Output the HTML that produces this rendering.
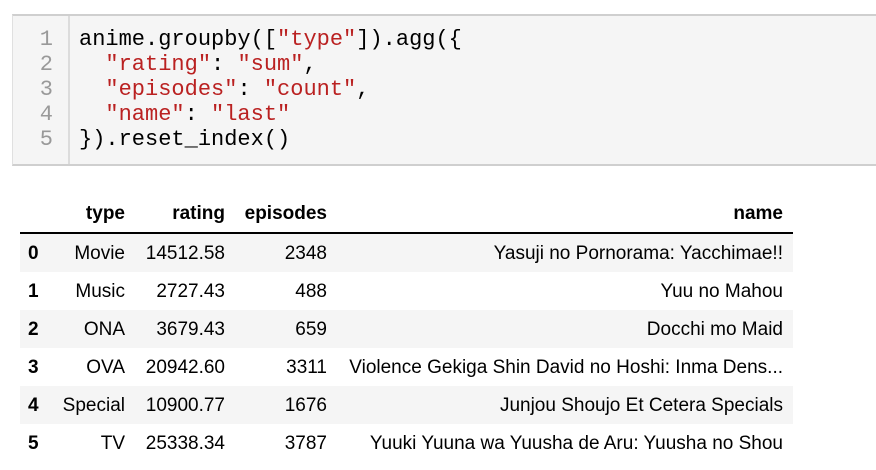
<!DOCTYPE html>
<html><head><meta charset="utf-8"><style>
body{margin:0;width:876px;height:470px;background:#fff;position:relative;overflow:hidden;font-family:"Liberation Sans",Arial,sans-serif;}
.code{position:absolute;left:12px;top:14px;width:864px;height:148px;background:#f5f5f5;border-top:2px solid #cfcfcf;border-bottom:2px solid #cfcfcf;border-left:1px solid #e0e0e0;}
.gut{position:absolute;left:55px;top:0;width:2px;height:148px;background:#dcdcdc;}
.ln{position:absolute;font-family:"Liberation Mono",monospace;font-size:22px;line-height:25px;}
.nums{left:0;width:40px;text-align:right;color:#999;top:11px;}
.src{left:66px;top:11px;color:#000;white-space:pre;}
.s{color:#ba2121;}
.row{position:absolute;left:20px;width:773px;height:38px;font-size:19px;color:#000;}
.row.g{background:#f5f5f5;}
.row span{position:absolute;top:9px;white-space:nowrap;}
.i{left:8px;font-weight:bold;}
.t{right:668px;}.r{right:568px;}.e{right:466px;}.n{right:10px;}
.hd span{font-weight:bold;}
</style></head><body>
<div class="code"><div class="gut"></div>
<div class="ln nums">1<br>2<br>3<br>4<br>5</div>
<div class="ln src">anime.groupby([<span class="s">"type"</span>]).agg({
  <span class="s">"rating"</span>: <span class="s">"sum"</span>,
  <span class="s">"episodes"</span>: <span class="s">"count"</span>,
  <span class="s">"name"</span>: <span class="s">"last"</span>
}).reset_index()</div>
</div>
<div class="row hd" style="top:194px;border-bottom:2px solid #000;"><span class="t">type</span><span class="r">rating</span><span class="e">episodes</span><span class="n">name</span></div>
<div class="row g" style="top:234px"><span class="i">0</span><span class="t">Movie</span><span class="r">14512.58</span><span class="e">2348</span><span class="n">Yasuji no Pornorama: Yacchimae!!</span></div>
<div class="row" style="top:272px"><span class="i">1</span><span class="t">Music</span><span class="r">2727.43</span><span class="e">488</span><span class="n">Yuu no Mahou</span></div>
<div class="row g" style="top:310px"><span class="i">2</span><span class="t">ONA</span><span class="r">3679.43</span><span class="e">659</span><span class="n">Docchi mo Maid</span></div>
<div class="row" style="top:348px"><span class="i">3</span><span class="t">OVA</span><span class="r">20942.60</span><span class="e">3311</span><span class="n">Violence Gekiga Shin David no Hoshi: Inma Dens...</span></div>
<div class="row g" style="top:386px"><span class="i">4</span><span class="t">Special</span><span class="r">10900.77</span><span class="e">1676</span><span class="n">Junjou Shoujo Et Cetera Specials</span></div>
<div class="row" style="top:424px"><span class="i">5</span><span class="t">TV</span><span class="r">25338.34</span><span class="e">3787</span><span class="n">Yuuki Yuuna wa Yuusha de Aru: Yuusha no Shou</span></div>
</body></html>
